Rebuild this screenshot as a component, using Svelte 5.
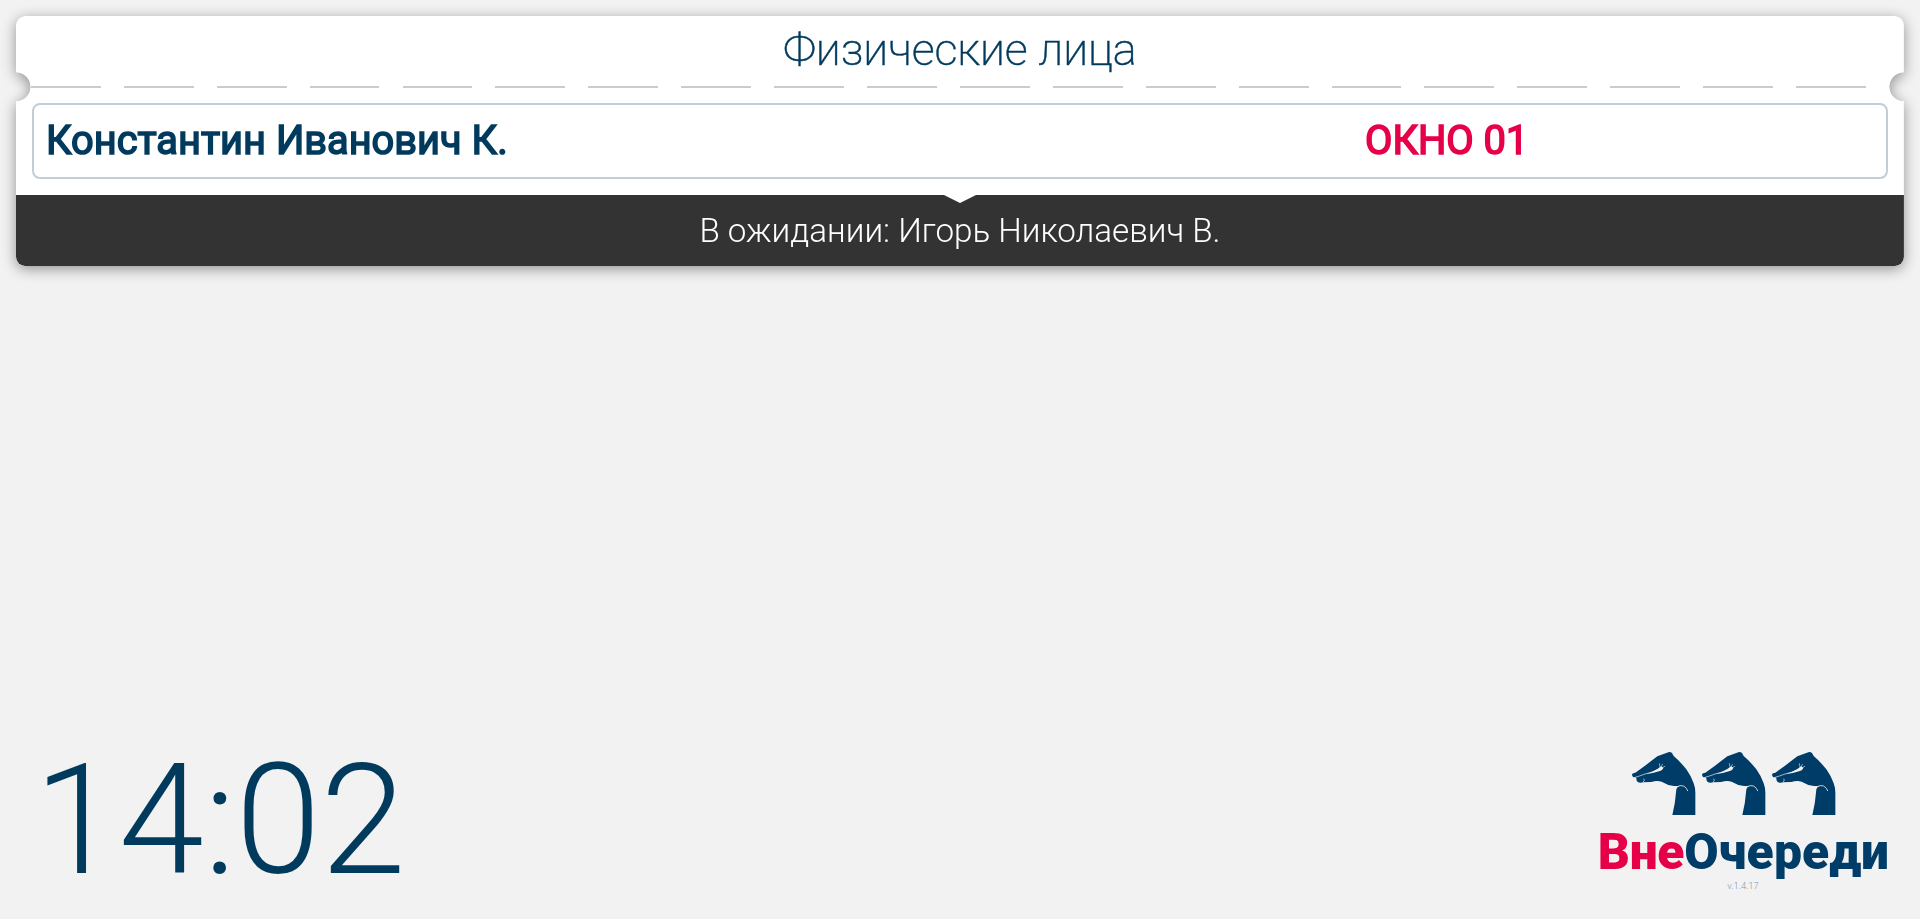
<script>
  const calls = [{ name: 'Константин Иванович К.', place: 'ОКНО 01' }];
  const hands = [0, 1, 2];
</script>

<div class="screen">
  <section class="ticket">
    <div class="sheet">
      <header class="head">
        <h1>Физические лица</h1>
      </header>
      <div class="tear"></div>
      <div class="calls">
        {#each calls as c}
          <div class="call">
            <span class="name">{c.name}</span>
            <span class="place">{c.place}</span>
          </div>
        {/each}
      </div>
      <footer class="waiting">
        <svg class="pointer" viewBox="0 0 32 8"><path d="M0 0h32L16 8z" fill="#fff" /></svg>
        <span>В ожидании: Игорь Николаевич В.</span>
      </footer>
    </div>
  </section>

  <div class="bottom">
    <time>14:02</time>
    <div class="brand">
      <div class="hands">
        {#each hands as h}
          <svg class="hand" viewBox="156 66 191 189">
            <path
              fill="#003c68"
              d="M156 133Q158 129 166 128L195 107L232 79L261 68Q270 64 276 69L281 78Q300 94 319 118Q334 139 341 160Q347 174 346 198V255H277Q286 220 289 178Q291 171 298 169Q282 169 265 165L245 155Q230 151 214 156L190 157Q180 160 173 156Q168 151 169 143L160 142Q156 139 156 133Z"
            />
            <g fill="none" stroke="#f2f2f2" stroke-linecap="round">
              <path d="M162 143Q180 138 195 132Q219 127 235 119" stroke-width="2" />
              <path d="M238 101Q238 109 241 113M247 103L241 117M254 109Q247 111 242 119" stroke-width="1.7" />
              <path d="M192 147Q195 151 190 156" stroke-width="2" />
              <path d="M288 171Q302 164 311 168Q321 174 323 182" stroke-width="2.4" />
            </g>
            <path fill="#f2f2f2" d="M198 132Q217 126 232 117L243 109L250 113Q248 121 237 124Q219 130 198 132Z" />
          </svg>
        {/each}
      </div>
      <div class="logo"><b>Вне</b>Очереди</div>
      <div class="version">v.1.4.17</div>
    </div>
  </div>
</div>

<style>
  :global(body) {
    margin: 0;
    background: #f2f2f2;
  }
  .screen {
    box-sizing: border-box;
    height: 919px;
    padding: 16px;
    display: flex;
    flex-direction: column;
    justify-content: space-between;
    overflow: hidden;
    background: #f2f2f2;
    font-family: Roboto, sans-serif;
    color: #003a5d;
  }
  /* the shadow follows the cut-outs of the sheet */
  .ticket {
    filter: drop-shadow(0 3px 7px rgba(0, 0, 0, 0.4));
  }
  .sheet {
    height: 250px;
    display: flex;
    flex-direction: column;
    border-radius: 9px;
    background: #fff;
    -webkit-mask:
      radial-gradient(circle at 0 70.8px, transparent 14px, #000 14.8px) left / 50.1% 100% no-repeat,
      radial-gradient(circle at 100% 70.8px, transparent 14px, #000 14.8px) right / 50.1% 100% no-repeat;
  }
  .head {
    height: 70px;
    display: flex;
    justify-content: center;
  }
  h1 {
    margin: 0;
    font-size: 45px;
    line-height: 68px;
    font-weight: 200;
    letter-spacing: -0.1px;
    -webkit-text-stroke: 0.45px currentColor;
  }
  .tear {
    height: 2px;
    margin: 0 15px;
    background: repeating-linear-gradient(90deg, #ccc 0 69.8px, transparent 69.8px 92.9px);
  }
  .calls {
    padding: 15px 16px 16px;
  }
  .call {
    box-sizing: border-box;
    height: 76px;
    padding: 0 12px;
    display: grid;
    grid-template-columns: 1319px 1fr;
    align-items: center;
    border: 2px solid #c2ced7;
    border-radius: 8px;
    font-size: 39.8px;
    line-height: 72px;
    font-weight: 400;
    -webkit-text-stroke: 1.6px currentColor;
  }
  .place {
    color: #e60048;
  }
  .waiting {
    position: relative;
    height: 71px;
    display: flex;
    justify-content: center;
    background: #333;
    color: #fff;
    border-radius: 0 0 9px 9px;
    font-size: 33.2px;
    line-height: 71px;
    font-weight: 300;
  }
  .pointer {
    position: absolute;
    top: 0;
    left: calc(50% - 16px);
    width: 32px;
    height: 8px;
  }
  .bottom {
    display: flex;
    justify-content: space-between;
    align-items: flex-end;
    padding: 0 16px 0 18px;
  }
  time {
    margin-bottom: 5px;
    font-size: 153.5px;
    line-height: 155px;
    font-weight: 300;
    letter-spacing: -0.3px;
  }
  .brand {
    width: 289px;
    display: flex;
    flex-direction: column;
    align-items: center;
    margin-bottom: 12px;
  }
  .hands {
    display: flex;
    gap: 6.6px;
    margin-right: 19px;
  }
  .hand {
    width: 63.7px;
    height: 63px;
  }
  .logo {
    margin-top: 8px;
    font-size: 49.8px;
    line-height: 58px;
    font-weight: 900;
    letter-spacing: 0.15px;
    white-space: nowrap;
    color: #003c68;
  }
  .logo b {
    font-weight: inherit;
    letter-spacing: -0.3px;
    color: #e60048;
  }
  .version {
    margin-right: 1px;
    font-size: 9.3px;
    line-height: 10px;
    font-weight: 300;
    color: #7f9aab;
  }
</style>
